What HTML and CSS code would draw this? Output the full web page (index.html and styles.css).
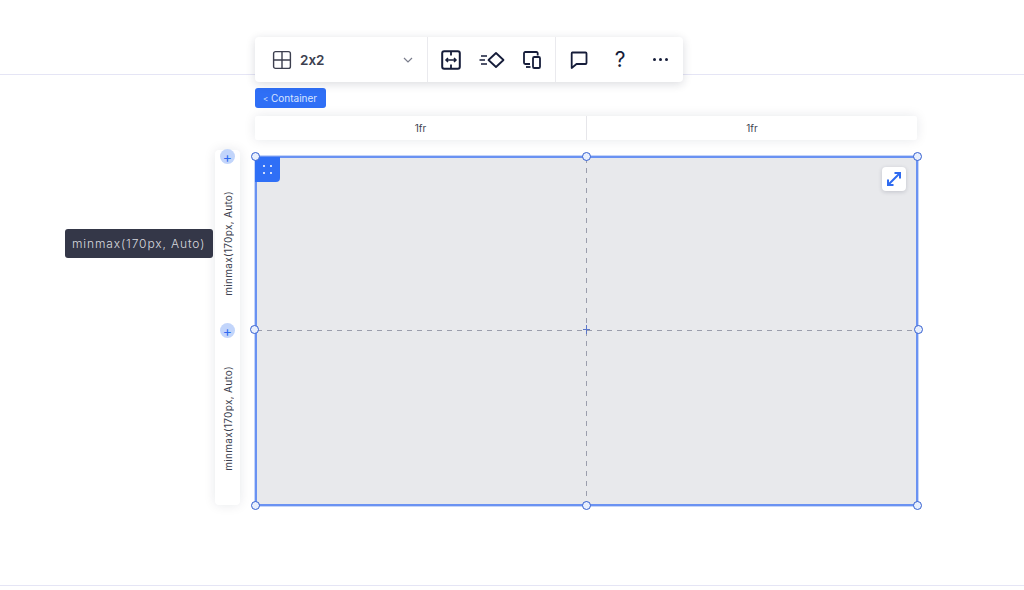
FILE: index.html
```html
<!DOCTYPE html>
<html lang="en">
<head>
    <meta charset="UTF-8">
    <title>Grid editor</title>
    <link rel="stylesheet" href="styles.css">
</head>
<body>
<div class="editor">
    <div class="guide guide-top"></div>
    <div class="guide guide-bottom"></div>

    <div class="toolbar">
        <div class="tool-group layout-select">
            <svg class="layout-icon" width="20" height="20" viewBox="0 0 20 20" fill="none" stroke="#3c3f4f" stroke-width="1.4">
                <rect x="1.6" y="1.6" width="16.8" height="16.8" rx="2"/>
                <path d="M10 1.6V18.4M1.6 10H18.4"/>
            </svg>
            <span class="layout-name">2x2</span>
            <svg class="chevron" width="10" height="6" viewBox="0 0 10 6" fill="none" stroke="#7a7d8c" stroke-width="1.2">
                <path d="M1 1L5 5L9 1"/>
            </svg>
        </div>
        <div class="tool-group tools-mid">
            <svg width="20" height="20" viewBox="0 0 20 20" fill="none" stroke="#161d3a" stroke-width="2">
                <rect x="1.2" y="1.2" width="17.6" height="17.6" rx="2"/>
                <path d="M10 1.5V5.5M10 14.5V18.5" stroke-width="1.8"/>
                <path d="M5 10H15M7 8L5 10L7 12M13 8L15 10L13 12" stroke-width="1.5"/>
            </svg>
            <svg width="26" height="18" viewBox="0 0 26 18" fill="none" stroke="#161d3a" stroke-width="1.8">
                <path d="M17 2L24.5 9L17 16L9.5 9Z" stroke-linejoin="round"/>
                <path d="M2 5H8M0.5 9H6M2 13H8" stroke-width="1.5"/>
            </svg>
            <svg width="18" height="18" viewBox="0 0 18 18" fill="none" stroke="#161d3a" stroke-width="1.8">
                <path d="M7 13H2.2A1.2 1.2 0 0 1 1 11.8V2.2A1.2 1.2 0 0 1 2.2 1H13.5A1.2 1.2 0 0 1 14.7 2.2V4.5"/>
                <rect x="10" y="6" width="7" height="11" rx="1.3"/>
                <path d="M3 16H7.5"/>
            </svg>
        </div>
        <div class="tool-group tools-help">
            <svg width="18" height="18" viewBox="0 0 18 18" fill="none" stroke="#161d3a" stroke-width="1.8">
                <path d="M2.5 1.5H15.5A1 1 0 0 1 16.5 2.5V12A1 1 0 0 1 15.5 13H6.5L1.7 17V2.5A1 1 0 0 1 2.5 1.5Z" stroke-linejoin="round"/>
            </svg>
            <span class="help-mark">?</span>
            <span class="more-dots"><i></i><i></i><i></i></span>
        </div>
    </div>

    <button class="back-pill"><span class="back-arrow">&lt;</span>Container</button>

    <div class="col-ruler">
        <div class="col-cell">1fr</div>
        <div class="col-cell">1fr</div>
    </div>

    <div class="stage">
        <div class="row-ruler">
            <div class="row-cell"><span>minmax(170px, Auto)</span></div>
            <div class="row-cell"><span>minmax(170px, Auto)</span></div>
            <div class="add-row add-row-top">+</div>
            <div class="add-row add-row-mid">+</div>
        </div>

        <div class="grid-box">
            <div class="grid-cell cell-a"></div>
            <div class="grid-cell cell-b"></div>
            <div class="grid-cell cell-c"></div>
            <div class="grid-cell cell-d"></div>

            <div class="drag-tab"><i></i><i></i><i></i><i></i></div>
            <div class="stretch-btn">
                <svg width="16" height="16" viewBox="0 0 16 16" fill="none" stroke="#2f6bf0" stroke-width="2">
                    <path d="M2 14L14 2M8.5 2H14V7.5M2 8.5V14H7.5"/>
                </svg>
            </div>
            <div class="center-mark"></div>

            <div class="handle h-tl"></div>
            <div class="handle h-tc"></div>
            <div class="handle h-tr"></div>
            <div class="handle h-ml"></div>
            <div class="handle h-mr"></div>
            <div class="handle h-bl"></div>
            <div class="handle h-bc"></div>
            <div class="handle h-br"></div>
        </div>
    </div>

    <div class="tooltip">minmax(170px, Auto)</div>
</div>
</body>
</html>
```

FILE: styles.css
```css
* {
    box-sizing: border-box;
}

body {
    margin: 0;
    background-color: #fff;
    font-family: Inter, "Liberation Sans", sans-serif;
    font-variant-ligatures: no-contextual;
    overflow: hidden;
}

.editor {
    position: relative;
    width: 1024px;
    height: 590px;
    padding: 37px 0 0 255px;
}

.guide {
    position: absolute;
    left: 0;
    right: 0;
    height: 1px;
    background-color: #e5e5f5;
}

.guide-top {
    top: 74px;
}

.guide-bottom {
    top: 585px;
}

.toolbar {
    position: relative;
    display: flex;
    width: 428px;
    height: 45px;
    background-color: #fff;
    border-radius: 4px;
    box-shadow: 0 2px 10px rgba(22, 29, 58, 0.16);
}

.tool-group {
    display: flex;
    align-items: center;
    border-right: 1px solid #eaeaee;
}

.tool-group:last-child {
    border-right: none;
}

.layout-select {
    width: 173px;
    padding: 0 14px 0 17px;
}

.layout-name {
    margin-left: 8px;
    font-size: 13.5px;
    font-weight: 600;
    color: #3c3f4f;
}

.chevron {
    margin-left: auto;
}

.tools-mid {
    width: 128px;
    padding-left: 13px;
    gap: 18px;
}

.tools-help {
    flex: 1;
    padding-left: 14px;
}

.help-mark {
    margin-left: 26px;
    width: 12px;
    font-size: 21px;
    font-weight: 400;
    color: #161d3a;
    text-align: center;
}

.more-dots {
    display: flex;
    gap: 3px;
    margin-left: 27px;
}

.more-dots i {
    width: 3px;
    height: 3px;
    border-radius: 50%;
    background-color: #161d3a;
}

.back-pill {
    display: block;
    width: 71px;
    height: 20px;
    margin-top: 6px;
    padding: 0 0 0 8px;
    border: none;
    border-radius: 3px;
    background-color: #2f6ff6;
    color: #d8e4ff;
    font-family: inherit;
    font-size: 10px;
    text-align: left;
    white-space: nowrap;
}

.back-arrow {
    display: inline-block;
    width: 8px;
    font-size: 8px;
}

.col-ruler {
    display: grid;
    grid-template-columns: 332px 330px;
    width: 662px;
    height: 24px;
    margin-top: 8px;
    background-color: #fff;
    box-shadow: 0 0 12px rgba(22, 29, 58, 0.1);
    border-radius: 2px;
}

.col-cell {
    display: flex;
    align-items: center;
    justify-content: center;
    font-size: 10px;
    color: #3c3f4f;
}

.col-cell:first-child {
    border-right: 1px solid #e6e6ea;
}

.stage {
    display: flex;
    margin: 10px 0 0 -40px;
}

.row-ruler {
    position: relative;
    width: 25px;
    height: 355px;
    margin-right: 15px;
    background-color: #fff;
    border-radius: 4px;
    box-shadow: 0 0 12px rgba(22, 29, 58, 0.1);
}

.row-cell {
    display: flex;
    align-items: center;
    justify-content: center;
    height: 175px;
    padding-top: 12px;
}

.row-cell span {
    writing-mode: vertical-rl;
    transform: rotate(180deg);
    font-size: 10px;
    letter-spacing: 0.3px;
    color: #3c3f4f;
    white-space: nowrap;
}

.add-row {
    position: absolute;
    left: 5px;
    width: 15px;
    height: 15px;
    border-radius: 50%;
    background-color: #c2d5fb;
    color: #2f6bf0;
    font-size: 14px;
    line-height: 15px;
    text-align: center;
}

.add-row-top {
    top: -1px;
}

.add-row-mid {
    top: 173px;
}

.grid-box {
    position: relative;
    display: grid;
    grid-template-columns: 1fr 1fr;
    grid-template-rows: 1fr 1fr;
    width: 663px;
    height: 350px;
    margin-top: 6px;
    background-color: #e8e9ec;
    border: 2px solid #6a92f2;
    box-shadow: 0 0 0 1px #c5d5f9;
}

/* the dashes are gradients, border: dashed gives them too short */
.cell-a {
    background-image:
        repeating-linear-gradient(to bottom, #9a9dac 0, #9a9dac 5px, transparent 5px, transparent 10px),
        repeating-linear-gradient(to right, #9a9dac 0, #9a9dac 5px, transparent 5px, transparent 10px);
    background-size: 1px 100%, 100% 1px;
    background-position: right top, left bottom;
    background-repeat: no-repeat;
}

.cell-b {
    background-image: repeating-linear-gradient(to right, #9a9dac 0, #9a9dac 5px, transparent 5px, transparent 10px);
    background-size: 100% 1px;
    background-position: left bottom;
    background-repeat: no-repeat;
}

.cell-c {
    background-image: repeating-linear-gradient(to bottom, #9a9dac 0, #9a9dac 5px, transparent 5px, transparent 10px);
    background-size: 1px 100%;
    background-position: right top;
    background-repeat: no-repeat;
}

.drag-tab {
    position: absolute;
    top: -1px;
    left: -2px;
    display: grid;
    grid-template-columns: 2px 2px;
    gap: 5px;
    align-content: center;
    justify-content: center;
    width: 25px;
    height: 25px;
    background-color: #2f6ff6;
    border-radius: 0 0 4px 0;
}

.drag-tab i {
    width: 2px;
    height: 2px;
    background-color: #cfdcfb;
}

.stretch-btn {
    position: absolute;
    top: 9px;
    right: 10px;
    display: flex;
    align-items: center;
    justify-content: center;
    width: 24px;
    height: 24px;
    background-color: #fff;
    border-radius: 4px;
    box-shadow: 0 1px 4px rgba(22, 29, 58, 0.18);
}

.center-mark {
    position: absolute;
    top: 167px;
    left: 329px;
    width: 1px;
    height: 9px;
    background-color: #5b76c9;
}

.center-mark::after {
    content: "";
    position: absolute;
    top: 4px;
    left: -3px;
    width: 7px;
    height: 1px;
    background-color: #5b76c9;
}

.handle {
    position: absolute;
    width: 9px;
    height: 9px;
    border: 1px solid #3560d0;
    border-radius: 50%;
    background-color: #e8effd;
}

.h-tl { top: -6px; left: -6px; }
.h-tc { top: -6px; left: 325px; }
.h-tr { top: -6px; right: -6px; }
.h-ml { top: 167px; left: -7px; }
.h-mr { top: 167px; right: -7px; }
.h-bl { bottom: -6px; left: -6px; }
.h-bc { bottom: -6px; left: 325px; }
.h-br { bottom: -6px; right: -6px; }

.tooltip {
    position: absolute;
    top: 229px;
    left: 65px;
    width: 148px;
    height: 29px;
    padding-left: 7px;
    background-color: #343748;
    border-radius: 3px;
    color: #d8d9de;
    font-size: 12px;
    font-weight: 300;
    letter-spacing: 0.88px;
    line-height: 29px;
    white-space: nowrap;
}
```
